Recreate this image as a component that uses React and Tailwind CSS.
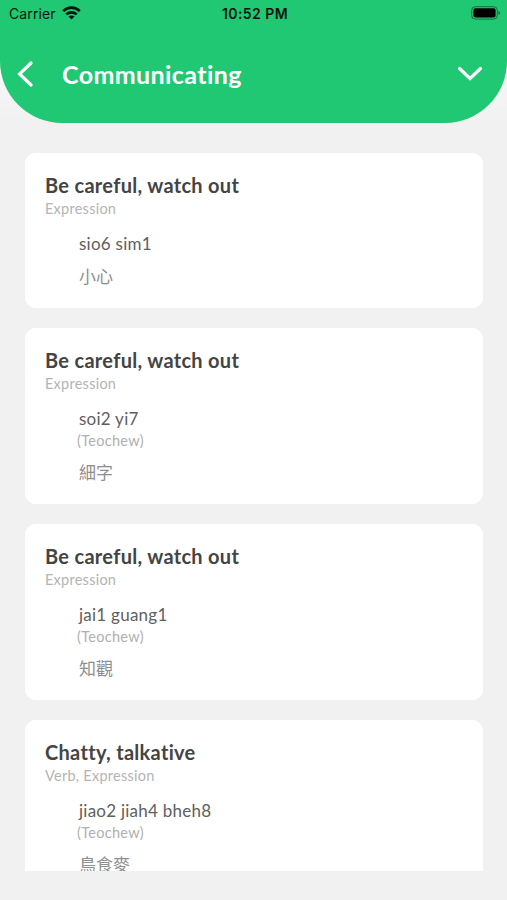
const entries = [
  { title: 'Be careful, watch out', type: 'Expression', pronunciation: 'sio6 sim1', hanzi: '小心' },
  { title: 'Be careful, watch out', type: 'Expression', pronunciation: 'soi2 yi7', dialect: 'Teochew', hanzi: '細字' },
  { title: 'Be careful, watch out', type: 'Expression', pronunciation: 'jai1 guang1', dialect: 'Teochew', hanzi: '知觀' },
  { title: 'Chatty, talkative', type: 'Verb, Expression', pronunciation: 'jiao2 jiah4 bheh8', dialect: 'Teochew', hanzi: '鳥食麥' },
]

function WifiIcon() {
  return (
    <svg width="19" height="14" viewBox="0 0 19 14" fill="none" stroke="#04150c" strokeWidth="2.7">
      <path d="M1.2 5.1C5.8 0.5 13.2 0.5 17.8 5.1" />
      <path d="M4.3 8.4C7.2 5.6 11.8 5.6 14.7 8.4" />
      <path d="M9.5 13.6L6.5 10.6C8.2 9.1 10.8 9.1 12.5 10.6Z" fill="#04150c" stroke="none" />
    </svg>
  )
}

function BatteryIcon() {
  return (
    <svg width="30" height="14" viewBox="0 0 30 14">
      <rect x="0.7" y="0.7" width="25.6" height="12.4" rx="3.6" fill="none" stroke="#0f7340" strokeWidth="1" />
      <rect x="2.4" y="2.3" width="22.2" height="9.2" rx="2" fill="#000" />
      <path d="M27.5 4.8C29.6 5.6 29.6 8.2 27.5 9Z" fill="#0f7340" />
    </svg>
  )
}

function StatusBar() {
  return (
    <div className="grid h-[26px] grid-cols-3 items-center pl-[9px] pr-[6px] font-['Inter','Liberation_Sans',sans-serif] text-[#04150c]">
      <div className="flex items-center gap-[6px]">
        <span className="text-[14px] tracking-[0.1px]">Carrier</span>
        <WifiIcon />
      </div>
      <span className="text-center text-[14px] font-semibold tracking-[0.45px]">10:52 PM</span>
      <div className="flex justify-end">
        <BatteryIcon />
      </div>
    </div>
  )
}

function Header() {
  return (
    <div className="bg-linear-to-b from-white to-[#f1f1f1]">
      <header className="h-[123px] rounded-b-[62px] bg-[#20c873]">
        <StatusBar />
        <div className="flex h-24 items-center pl-[17px] pr-6 text-white">
          <button aria-label="Back">
            <svg width="16" height="26" viewBox="0 0 16 26" fill="none" stroke="currentColor" strokeWidth="3.2" strokeLinecap="round" strokeLinejoin="miter">
              <path d="M14 2L2.6 13L14 24" />
            </svg>
          </button>
          <h1 className="ml-[29px] flex-1 text-[25px] leading-8 font-bold tracking-[0.4px]">Communicating</h1>
          <button aria-label="Expand">
            <svg width="26" height="16" viewBox="0 0 26 16" fill="none" stroke="currentColor" strokeWidth="3.2" strokeLinecap="round" strokeLinejoin="miter">
              <path d="M2.5 2.5L13 12.5L23.5 2.5" />
            </svg>
          </button>
        </div>
      </header>
    </div>
  )
}

function EntryCard({ entry }) {
  return (
    <div className="shrink-0 rounded-[11px] bg-white p-5">
      <h2 className="text-[20px] leading-[25px] font-bold tracking-[0.3px] text-[#444]">{entry.title}</h2>
      <p className="text-[14.5px] leading-[22px] tracking-[0.25px] text-[#b4b4b4]">{entry.type}</p>
      <div className="mt-[13px] pl-[34px]">
        <p className="text-[17px] leading-[22px] tracking-[0.25px] text-[#606060]">{entry.pronunciation}</p>
        {entry.dialect && (
          <p className="-ml-[2px] text-[14.5px] leading-[21px] tracking-[0.3px] text-[#b0b0b0]">({entry.dialect})</p>
        )}
        <p className="mt-[10px] mb-px font-['Noto_Sans_CJK_TC',sans-serif] text-[17px] leading-[22px] text-[#8e8e8e]">{entry.hanzi}</p>
      </div>
    </div>
  )
}

export default function App() {
  return (
    <div className="flex h-[900px] w-[507px] flex-col overflow-hidden bg-[#f1f1f1] font-['Lato','Noto_Sans_CJK_TC',sans-serif]">
      <Header />
      <main className="mt-[30px] ml-[25px] flex h-[718px] w-[458px] flex-col gap-5 overflow-hidden">
        {entries.map((entry, i) => (
          <EntryCard key={i} entry={entry} />
        ))}
      </main>
    </div>
  )
}
